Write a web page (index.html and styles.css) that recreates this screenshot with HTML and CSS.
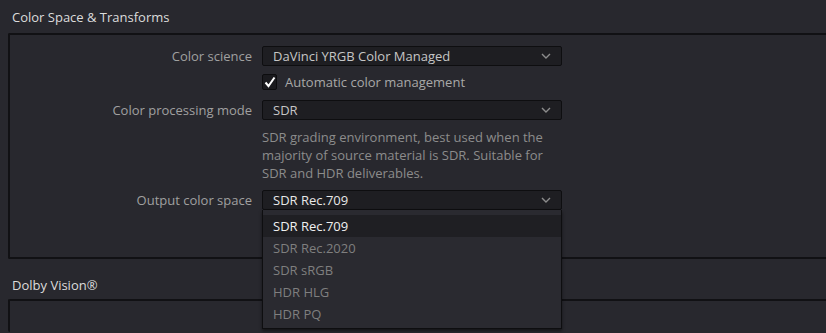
FILE: index.html
```html
<!DOCTYPE html>
<html lang="en">
<head>
    <meta charset="UTF-8">
    <meta name="viewport" content="width=device-width, initial-scale=1.0">
    <title>Color Management</title>
    <link rel="stylesheet" href="styles.css">
</head>
<body>

<div class="section-title">Color Space &amp; Transforms</div>
<div class="panel">
    <div class="row">
        <div class="label">Color science</div>
        <div class="select">
            <span>DaVinci YRGB Color Managed</span>
            <svg class="chevron" width="10" height="6" viewBox="0 0 10 6"><path d="M1 1 L5 5 L9 1" fill="none" stroke="#8c8c8c" stroke-width="1.4"/></svg>
        </div>
    </div>
    <div class="row check-row">
        <div class="label"></div>
        <div class="check">
            <span class="box">
                <svg width="12" height="12" viewBox="0 0 12 12"><path d="M1.5 6.5 L4.5 10 L10.5 1.5" fill="none" stroke="#fff" stroke-width="2"/></svg>
            </span>
            <span>Automatic color management</span>
        </div>
    </div>
    <div class="row">
        <div class="label">Color processing mode</div>
        <div class="select">
            <span>SDR</span>
            <svg class="chevron" width="10" height="6" viewBox="0 0 10 6"><path d="M1 1 L5 5 L9 1" fill="none" stroke="#8c8c8c" stroke-width="1.4"/></svg>
        </div>
    </div>
    <div class="row">
        <div class="label"></div>
        <div class="note">SDR grading environment, best used when the majority of source material is SDR. Suitable for SDR and HDR deliverables.</div>
    </div>
    <div class="row">
        <div class="label">Output color space</div>
        <div class="select open">
            <span>SDR Rec.709</span>
            <svg class="chevron" width="10" height="6" viewBox="0 0 10 6"><path d="M1 1 L5 5 L9 1" fill="none" stroke="#8c8c8c" stroke-width="1.4"/></svg>
            <div class="menu">
                <div class="item active">SDR Rec.709</div>
                <div class="item">SDR Rec.2020</div>
                <div class="item">SDR sRGB</div>
                <div class="item">HDR HLG</div>
                <div class="item">HDR PQ</div>
            </div>
        </div>
    </div>
</div>

<div class="section-title second">Dolby Vision&reg;</div>
<div class="panel short"></div>

</body>
</html>
```

FILE: styles.css
```css
body {
    margin: 0;
    height: 333px;
    background-color: #28282e;
    font-family: "Open Sans", "Noto Sans", sans-serif;
    font-size: 13px;
    color: #a3a3a3;
    overflow: hidden;
}

.section-title {
    color: #dcdcdc;
    padding: 7px 12px 0 12px;
    height: 26px;
    line-height: 20px;
}

.section-title.second {
    padding-top: 16px;
    height: 24px;
}

.panel {
    margin-left: 8px;
    border: 2px solid #111114;
    border-right: none;
    border-radius: 2px 0 0 2px;
    padding: 11px 0 40px 0;
}

.panel.short {
    height: 31px;
    padding: 0;
    border-bottom: none;
}

.row {
    display: flex;
    align-items: center;
    gap: 10px;
    margin-bottom: 7px;
}

.check-row {
    margin-bottom: 9px;
}

.label {
    width: 242px;
    text-align: right;
    color: #a0a0a0;
    flex-shrink: 0;
}

.select {
    position: relative;
    width: 298px;
    height: 18px;
    background-color: #1e1e22;
    border: 1px solid #0e0e10;
    border-radius: 2px;
    display: flex;
    align-items: center;
    justify-content: space-between;
    color: #c6c6c6;
}

.select span {
    padding-left: 10px;
}

.select.open span {
    color: #e8e8e8;
}

.chevron {
    margin-right: 10px;
}

.check {
    display: flex;
    align-items: center;
    gap: 8px;
    color: #a8a8a8;
}

.box {
    width: 13px;
    height: 14px;
    background-color: #1a1a1e;
    border: 1px solid #0c0c0e;
    border-radius: 2px;
    display: flex;
    align-items: center;
    justify-content: center;
}

.note {
    width: 300px;
    line-height: 18px;
    color: #8c8c8c;
    margin-top: 1px;
    margin-bottom: 1px;
}

.menu {
    position: absolute;
    top: 19px;
    left: -1px;
    width: 298px;
    background-color: #2a2a30;
    border: 1px solid #0e0e10;
    border-top: none;
    padding-top: 5px;
    padding-bottom: 3px;
    box-shadow: 0 2px 3px rgba(0, 0, 0, 0.5);
    z-index: 2;
}

.menu .item {
    height: 22px;
    line-height: 22px;
    padding-left: 10px;
    color: #7f7f7f;
}

.menu .item.active {
    background-color: #1f1f23;
    color: #f0f0f0;
}
```
